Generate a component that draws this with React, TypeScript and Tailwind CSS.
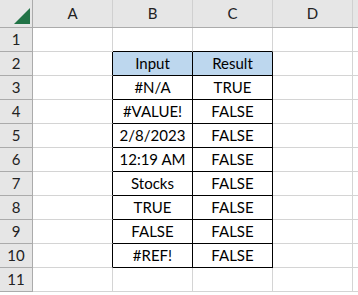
import React from "react";

const rows: [string, string][] = [
  ["#N/A", "TRUE"],
  ["#VALUE!", "FALSE"],
  ["2/8/2023", "FALSE"],
  ["12:19 AM", "FALSE"],
  ["Stocks", "FALSE"],
  ["TRUE", "FALSE"],
  ["FALSE", "FALSE"],
  ["#REF!", "FALSE"],
];

export default function App() {
  const font = { fontFamily: "Lato, 'Noto Sans', sans-serif" };
  return (
    <div className="w-[358px] h-[295px] overflow-hidden bg-white text-[15px] text-black" style={font}>
      {/* header */}
      <div className="flex h-[28px] bg-[#e6e6e6] border-b border-[#ababab]">
        <div className="w-[33px] shrink-0 border-r border-[#ababab] relative">
          <svg width="33" height="27" className="absolute left-0 top-0">
            <polygon points="14,24 30,24 30,8" fill="#217346" />
          </svg>
        </div>
        {["A", "B", "C", "D"].map((c, i) => (
          <div
            key={c}
            className={`${i === 0 ? "w-[80px]" : "w-[80px]"} shrink-0 border-r border-[#d0d0d0] flex items-center justify-center text-[#222]`}
          >
            {c}
          </div>
        ))}
        <div className="flex-1" />
      </div>
      {Array.from({ length: 11 }).map((_, r) => {
        const n = r + 1;
        const inTable = n >= 2 && n <= 10;
        const isHead = n === 2;
        const b = n === 2 ? "Input" : inTable ? rows[n - 3][0] : "";
        const c = n === 2 ? "Result" : inTable ? rows[n - 3][1] : "";
        const topBlack = n === 1;
        return (
          <div key={n} className="flex h-[24px]">
            <div className="w-[33px] shrink-0 bg-[#e6e6e6] border-r border-b border-[#ababab] flex items-center justify-center text-[#222]">
              {n}
            </div>
            <div
              className={`w-[80px] shrink-0 border-b border-[#d4d4d4] border-r ${inTable ? "border-r-black" : "border-r-[#d4d4d4]"}`}
            />
            <div
              className={`w-[80px] shrink-0 border-r flex items-center justify-center ${
                inTable ? "border-r-black" : "border-r-[#d4d4d4]"
              } border-b ${inTable || topBlack ? "border-b-black" : "border-b-[#d4d4d4]"} ${isHead ? "bg-[#bdd7ee]" : ""}`}
            >
              {b}
            </div>
            <div
              className={`w-[80px] shrink-0 border-r flex items-center justify-center ${
                inTable ? "border-r-black" : "border-r-[#d4d4d4]"
              } border-b ${inTable || topBlack ? "border-b-black" : "border-b-[#d4d4d4]"} ${isHead ? "bg-[#bdd7ee]" : ""}`}
            >
              {c}
            </div>
            <div className="w-[80px] shrink-0 border-r border-b border-[#d4d4d4]" />
            <div className="flex-1 border-b border-[#d4d4d4]" />
          </div>
        );
      })}
    </div>
  );
}
